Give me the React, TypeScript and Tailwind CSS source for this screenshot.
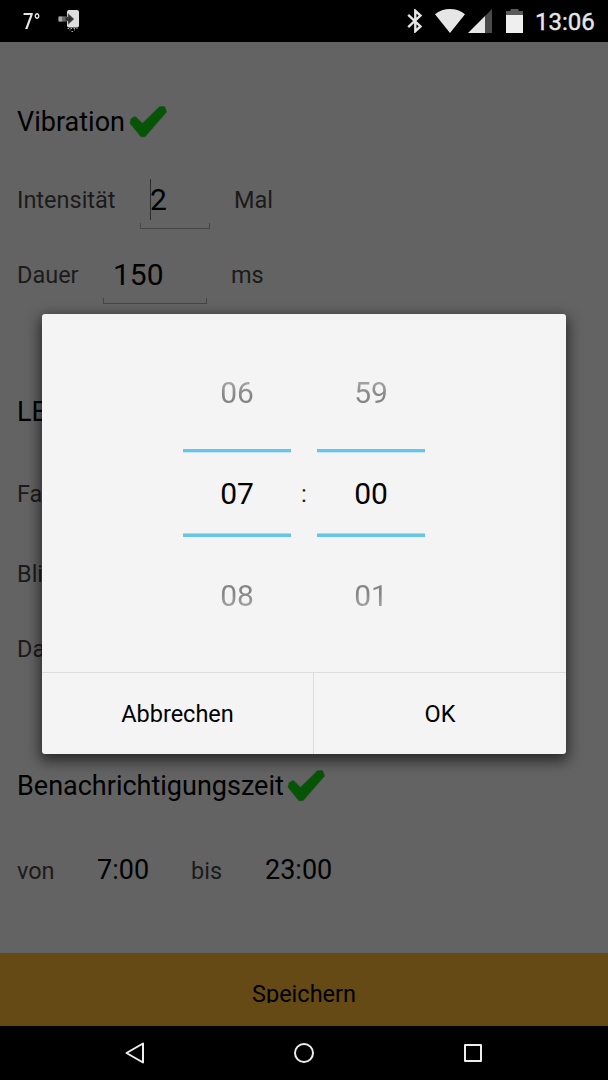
import { ReactNode } from 'react'
import clsx from 'clsx'

function CheckMark() {
  return (
    <svg width="40" height="36" viewBox="0 0 40 36" strokeLinecap="round" strokeLinejoin="round">
      <path d="M3 15.500 6 13.800 13.500 21 31 3.800 34.800 3.800 36.200 7.600 15.500 31.500 12.500 31.500 2.300 19z" fill="#065406" stroke="#4e564e" strokeWidth="3.600" />
      <path d="M3 15.500 6 13.800 13.500 21 31 3.800 34.800 3.800 36.200 7.600 15.500 31.500 12.500 31.500 2.300 19z" fill="#065406" stroke="#065406" strokeWidth="2.400" />
    </svg>
  )
}

function StatusBar() {
  return (
    <header className="flex h-[42px] items-center bg-black text-[#e6e6e6]">
      <span className="ml-[23px] w-[35px] origin-left scale-x-[.84] pt-[2px] text-[22px] font-medium leading-none">7°</span>
      <svg width="22" height="24" viewBox="0 0 22 24">
        <rect x="9" y="1" width="12" height="17.500" rx="2" fill="#dedede" />
        <path d="M1 8h9V4.500l6 5.500-6 5.500V12H1z" fill="#303030" stroke="#888" strokeWidth=".5" />
        <path d="M.5 7.500h4v5h-4z" fill="#a8a8a8" />
        <path d="M4.500 7.500h3v5h-3z" fill="#666" />
        <path d="M9.500 19.500h1.500m1.500 0h1.500m1.500 0h1.500m1.500 0h1M11.500 21h1m3.500 0h1m-3.500 1.500h1.500" stroke="#aaa" strokeWidth="1" />
      </svg>
      <div className="ml-auto flex items-center">
        <svg width="16" height="24" viewBox="0 0 16 24" fill="none" stroke="#e6e6e6" strokeWidth="2.400">
          <path d="M1.200 5.800 13.500 17.400 8.300 22.200V1.800L13.500 6.600 1.200 18.200" />
        </svg>
        <svg className="ml-[12px]" width="30" height="24" viewBox="0 0 30 24">
          <path d="M0 5.200C8-1.700 22-1.700 30 5.200L15 24z" fill="#e6e6e6" />
        </svg>
        <svg className="ml-[3px]" width="24" height="24" viewBox="0 0 24 24">
          <path d="M24 0v24H17V7z" fill="#4a4a4a" />
          <path d="M17 7v17H0z" fill="#e6e6e6" />
        </svg>
        <svg className="ml-[14px]" width="17" height="24" viewBox="0 0 17 24">
          <path d="M0 2h4.500V0h8v2H17v5H0z" fill="#5a5a5a" />
          <path d="M0 6h17v18H0z" fill="#efefef" />
        </svg>
        <span className="ml-[12px] mr-[12px] w-[61px] pt-[2px] text-[24px] leading-none [-webkit-text-stroke:.4px_#e6e6e6]">13:06</span>
      </div>
    </header>
  )
}

function Row({ className, children }: { className: string; children: ReactNode }) {
  return (
    <div className={clsx('flex h-[50px] items-center whitespace-nowrap pl-[17px] text-[23.5px] leading-none text-[#1b1b1b]', className)}>
      {children}
    </div>
  )
}

function Heading({ children }: { children: ReactNode }) {
  return <h2 className="text-[27px] text-black">{children}</h2>
}

function Field({ value, className, focused }: { value: string; className: string; focused?: boolean }) {
  return (
    <div className={clsx('relative flex h-[56px] shrink-0 items-center pb-[2px] pl-[10px] text-[30px] text-black', className)}>
      {focused && <span className="absolute left-[9.500px] top-[6px] h-[41px] w-px bg-[#2c2c2c]" />}
      {value}
      <span className="absolute inset-x-0 bottom-0 h-[6px] border-x border-b border-[#464646]" />
    </div>
  )
}

function NumberColumn({ values }: { values: [string, string, string] }) {
  const [prev, current, next] = values
  return (
    <div className="flex w-[108px] flex-col items-center text-[30px] leading-none">
      <span className="flex h-[34px] items-center bg-linear-to-b from-[#b0b0b0] to-[#858585] to-60% bg-clip-text text-transparent">{prev}</span>
      <div className="mt-[39px] flex h-[88px] w-full items-center justify-center border-y-[3px] border-[#67c5e9] pt-[2px] text-black shadow-[inset_0_1px_#c4e4f0,inset_0_-1px_#a5d9ee]">
        {current}
      </div>
      <span className="mt-[42px] flex h-[34px] items-center bg-linear-to-b from-[#858585] from-40% to-[#b0b0b0] bg-clip-text text-transparent">{next}</span>
    </div>
  )
}

function TimeDialog() {
  return (
    <div className="absolute inset-0 flex items-center justify-center">
      <div className="mb-px flex h-[440px] w-[524px] flex-col overflow-hidden rounded-[3px] bg-[#f4f4f4] shadow-[0_5px_14px_2px_rgba(0,0,0,.6)]">
        <div className="flex h-[358px] justify-center pt-[62px]">
          <NumberColumn values={['06', '07', '08']} />
          <span className="mt-[106px] w-[26px] text-center text-[24px] leading-none text-[#222]">:</span>
          <NumberColumn values={['59', '00', '01']} />
        </div>
        <div className="flex flex-1 border-t border-[#dcdcdc] text-[23.5px] leading-none text-black">
          <button className="w-[272px] border-r border-[#dcdcdc] pt-[4px]">Abbrechen</button>
          <button className="flex-1 pt-[4px]">OK</button>
        </div>
      </div>
    </div>
  )
}

export default function App() {
  return (
    <div className="flex h-[1080px] w-[608px] flex-col overflow-hidden bg-black font-['Roboto',sans-serif]">
      <StatusBar />
      <main className="relative flex flex-1 flex-col bg-[#636363]">
        <Row className="mt-[55px]">
          <Heading>Vibration</Heading>
          <div className="ml-[4px]"><CheckMark /></div>
        </Row>
        <Row className="mt-[29px]">
          <span className="w-[123px]">Intensität</span>
          <Field value="2" className="w-[70px]" focused />
          <span className="ml-[24px]">Mal</span>
        </Row>
        <Row className="mt-[25px]">
          <span className="w-[86px]">Dauer</span>
          <Field value="150" className="w-[104px]" />
          <span className="ml-[24px]">ms</span>
        </Row>
        <Row className="mt-[86px]"><Heading>LED</Heading></Row>
        <Row className="mt-[33px]">Farbe</Row>
        <Row className="mt-[30px]">Blinken</Row>
        <Row className="mt-[25px]">Dauer</Row>
        <Row className="mt-[86px]">
          <Heading>Benachrichtigungszeit</Heading>
          <div className="ml-[3px]"><CheckMark /></div>
        </Row>
        <Row className="mt-[34px]">
          <div className="flex items-baseline">
            <span className="w-[80px]">von</span>
            <span className="w-[94px] text-[27px] text-black">7:00</span>
            <span className="w-[74px]">bis</span>
            <span className="text-[27px] text-black">23:00</span>
          </div>
        </Row>
        <button className="mt-auto flex h-[73px] justify-center bg-[#664a16] pt-[28px] text-[23.5px] leading-[26px] text-black">
          {/* label box is shorter than its line, so the descender is cut off */}
          <span className="h-[22px] overflow-hidden">Speichern</span>
        </button>
        <TimeDialog />
      </main>
      <nav className="flex h-[54px] items-center justify-between px-[124px]">
        <svg width="22" height="24" viewBox="0 0 22 24" fill="none" stroke="#eee" strokeWidth="2" strokeLinejoin="round">
          <path d="M19 2.500v19L2.500 12z" />
        </svg>
        <svg width="22" height="22" viewBox="0 0 22 22" fill="none" stroke="#eee" strokeWidth="2">
          <circle cx="11" cy="11" r="9" />
        </svg>
        <svg width="22" height="22" viewBox="0 0 22 22" fill="none" stroke="#eee" strokeWidth="2" strokeLinejoin="round">
          <rect x="3" y="3" width="16" height="16" />
        </svg>
      </nav>
    </div>
  )
}
